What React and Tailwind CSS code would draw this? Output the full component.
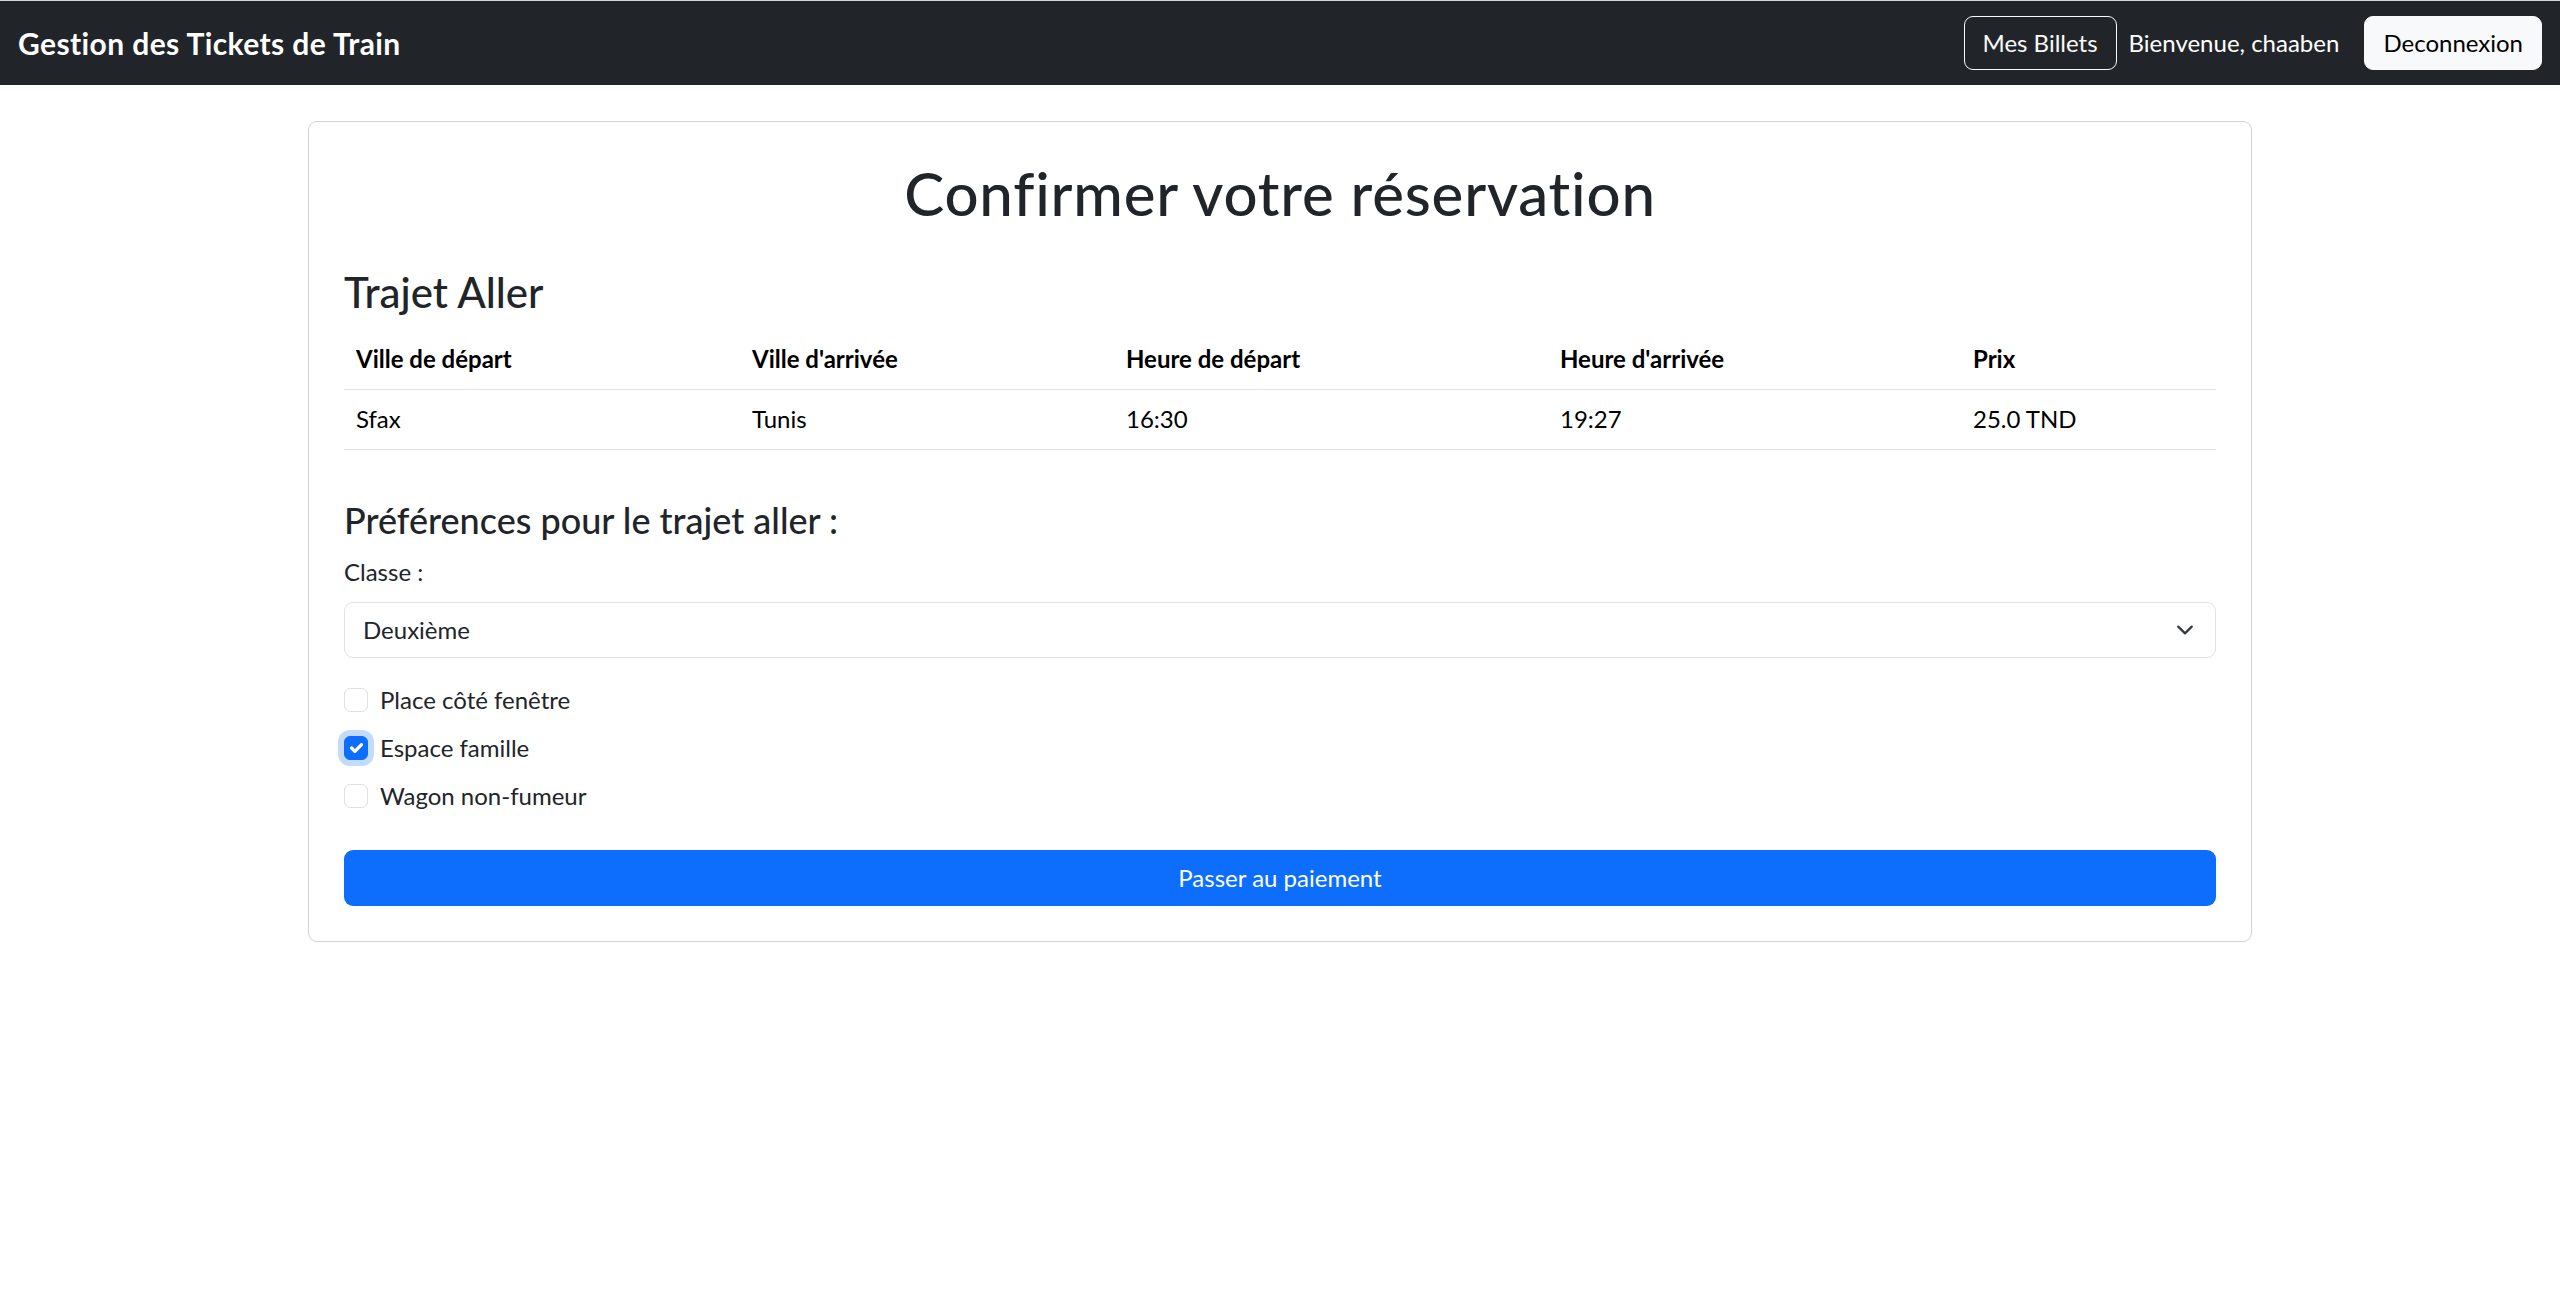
import React from "react";

function Check({ checked }) {
  if (checked) {
    return (
      <span className="mt-[6px] flex h-[24px] w-[24px] shrink-0 items-center justify-center rounded-[6px] border border-[#0d6efd] bg-[#0d6efd] shadow-[0_0_0_6px_rgba(13,110,253,0.25)]">
        <svg viewBox="0 0 20 20" className="h-[24px] w-[24px]">
          <path d="m6 10 3 3 6-6" fill="none" stroke="#fff" strokeWidth="3" strokeLinecap="round" strokeLinejoin="round" />
        </svg>
      </span>
    );
  }
  return <span className="mt-[6px] h-[24px] w-[24px] shrink-0 rounded-[6px] border border-[#dee2e6] bg-white" />;
}

function CheckRow({ label, checked }) {
  return (
    <div className="mb-[12px] flex h-[36px] items-start">
      <Check checked={checked} />
      <span className="ml-[12px] leading-[36px]">{label}</span>
    </div>
  );
}

export default function App() {
  const cols = [
    { h: "Ville de départ", v: "Sfax", w: "w-[396px]" },
    { h: "Ville d'arrivée", v: "Tunis", w: "w-[374px]" },
    { h: "Heure de départ", v: "16:30", w: "w-[434px]" },
    { h: "Heure d'arrivée", v: "19:27", w: "w-[413px]" },
    { h: "Prix", v: "25.0 TND", w: "" },
  ];
  return (
    <div className="min-h-[1309px] bg-white font-['Lato','Noto_Sans',sans-serif] text-[24px] leading-[1.5] text-[#212529]">
      <nav className="flex h-[85px] items-center justify-between border-t border-[#d6d6d6] bg-[#212529] px-[18px]">
        <span className="text-[30px] font-bold tracking-[0.4px] text-white">Gestion des Tickets de Train</span>
        <div className="flex items-center">
          <button className="rounded-[9px] border border-[#f8f9fa] px-[18px] py-[8px] leading-[36px] text-[#f8f9fa]">Mes Billets</button>
          <span className="ml-[12px] mr-[25px] text-white">Bienvenue, chaaben</span>
          <button className="rounded-[9px] border border-[#f8f9fa] bg-[#f8f9fa] px-[18px] py-[8px] leading-[36px] text-black">Deconnexion</button>
        </div>
      </nav>

      <main className="mx-auto mt-[36px] w-[1944px]">
        <div className="rounded-[9px] border border-[rgba(0,0,0,0.175)] p-[35px]">
          <h1 className="mb-[38px] text-center text-[60px] font-medium leading-[1.2] tracking-[0.8px]">Confirmer votre réservation</h1>
          <h3 className="mb-[12px] text-[42px] font-medium leading-[1.2]">Trajet Aller</h3>
          <table className="w-full table-fixed border-collapse text-black">
            <thead>
              <tr className="border-b border-[#dee2e6]">
                {cols.map((c) => (
                  <th key={c.h} className={`${c.w} h-[60px] px-[12px] text-left font-bold`}>{c.h}</th>
                ))}
              </tr>
            </thead>
            <tbody>
              <tr className="border-b border-[#dee2e6]">
                {cols.map((c) => (
                  <td key={c.h} className="h-[60px] px-[12px]">{c.v}</td>
                ))}
              </tr>
            </tbody>
          </table>

          <h4 className="mb-[12px] mt-[49px] text-[36px] font-medium leading-[1.2]">Préférences pour le trajet aller :</h4>
          <label className="mb-[12px] block">Classe :</label>
          <div className="mb-[24px] flex h-[56px] items-center justify-between rounded-[9px] border border-[#dee2e6] pl-[18px] pr-[21px]">
            <span>Deuxième</span>
            <svg viewBox="0 0 16 16" className="h-[18px] w-[18px]">
              <path d="m2 5 6 6 6-6" fill="none" stroke="#343a40" strokeWidth="2" strokeLinecap="round" strokeLinejoin="round" />
            </svg>
          </div>

          <CheckRow label="Place côté fenêtre" />
          <CheckRow label="Espace famille" checked />
          <CheckRow label="Wagon non-fumeur" />

          <button className="mt-[36px] flex h-[56px] w-full items-center justify-center rounded-[9px] bg-[#0d6efd] text-white">Passer au paiement</button>
        </div>
      </main>
    </div>
  );
}
